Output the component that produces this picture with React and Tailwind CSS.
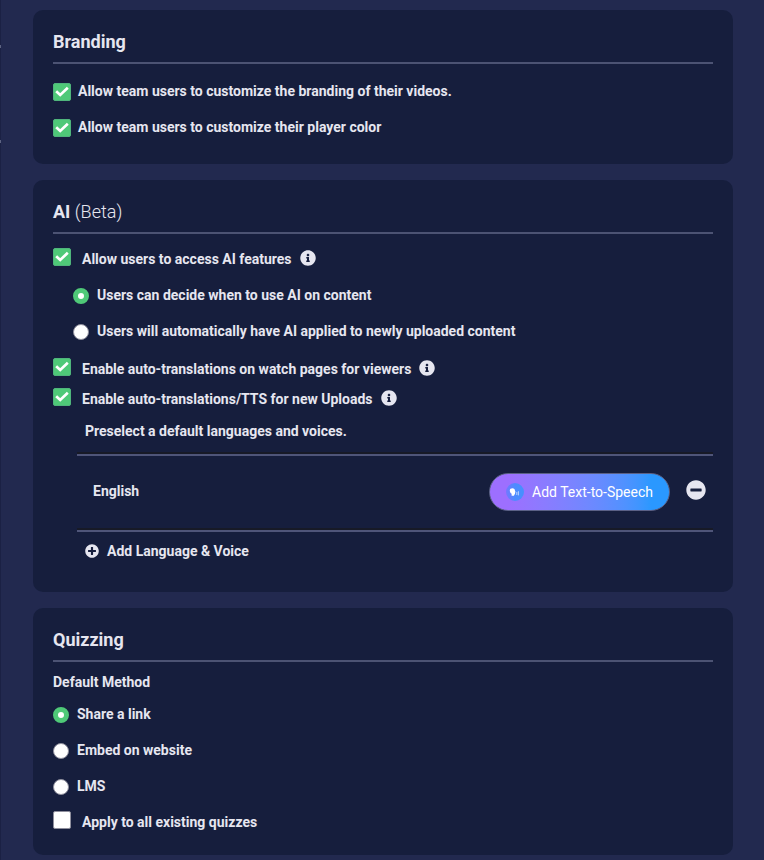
import { FaInfoCircle, FaMinusCircle, FaPlusCircle } from 'react-icons/fa'

/**
 * Team settings page: branding, AI and quizzing options.
 */
export default function App() {
  return (
    <div className="flex min-h-screen bg-[#22294f] font-['Roboto',sans-serif] text-sm font-bold text-[#e6e6f0]">
      <SidebarEdge />
      <main className="flex min-w-0 flex-1 flex-col gap-4 pt-2.5 pr-[31px] pb-[5px] pl-8">
        <BrandingCard />
        <AiCard />
        <QuizzingCard />
      </main>
    </div>
  )
}

// -------------------------------------------------------------------------
// Sections
// -------------------------------------------------------------------------

function BrandingCard() {
  return (
    <Card title="Branding" className="pb-[27px]">
      <div className="flex flex-col gap-[18px] pt-[19px]">
        <label className="flex items-center gap-[7px] leading-4">
          <Checkbox defaultChecked />
          <span className="pb-0.5">Allow team users to customize the branding of their videos.</span>
        </label>
        <label className="flex items-center gap-[7px] leading-4">
          <Checkbox defaultChecked />
          <span className="pb-0.5">Allow team users to customize their player color</span>
        </label>
      </div>
    </Card>
  )
}

function AiCard() {
  return (
    <Card
      title={<>AI <span className="font-light">(Beta)</span></>}
      className="pb-[31px]"
    >
      <div className="flex flex-col pt-3.5">
        <CheckRow label="Allow users to access AI features" defaultChecked info />

        <div className="flex flex-col gap-4 py-4 pl-5">
          <RadioRow name="ai-mode" label="Users can decide when to use AI on content" defaultChecked />
          <RadioRow name="ai-mode" label="Users will automatically have AI applied to newly uploaded content" />
        </div>

        <div className="flex flex-col gap-2">
          <CheckRow label="Enable auto-translations on watch pages for viewers" defaultChecked info />
          <CheckRow label="Enable auto-translations/TTS for new Uploads" defaultChecked info />
        </div>

        <div className="pt-[11px] pl-6">
          <p className="pb-[11px] pl-2 leading-5">Preselect a default languages and voices.</p>
          <Divider />
          <div className="flex h-[72px] items-center pr-[7px] pl-4">
            <span className="flex-1 pb-0.5">English</span>
            <button
              type="button"
              className="flex h-[38px] items-center gap-2 rounded-full border border-[#5b6186] bg-linear-to-r from-[#9d6fff] from-10% to-[#2a98ff] to-90% px-4 font-normal text-white"
            >
              <SpeechIcon />
              Add Text-to-Speech
            </button>
            <button type="button" aria-label="Remove English" className="ml-4 pb-1">
              <FaMinusCircle size={20} />
            </button>
          </div>
          <Divider />
          <button type="button" className="mt-[9px] ml-2 flex items-center gap-2 leading-5">
            <FaPlusCircle size={14} />
            Add Language &amp; Voice
          </button>
        </div>
      </div>
    </Card>
  )
}

function QuizzingCard() {
  return (
    <Card title="Quizzing" className="pb-[22px]">
      <fieldset className="pt-2.5">
        <legend className="float-left w-full leading-5">Default Method</legend>
        <div className="clear-both flex flex-col gap-4 pt-[13px]">
          <RadioRow name="quiz-method" label="Share a link" defaultChecked />
          <RadioRow name="quiz-method" label="Embed on website" />
          <RadioRow name="quiz-method" label="LMS" />
        </div>
      </fieldset>
      <div className="pt-3.5">
        <CheckRow label="Apply to all existing quizzes" />
      </div>
    </Card>
  )
}

// -------------------------------------------------------------------------
// Shared pieces
// -------------------------------------------------------------------------

function Card({ title, className, children }) {
  return (
    <section className={`rounded-[10px] bg-[#161e3d] px-5 pt-5 ${className}`}>
      <h2 className="border-b-2 border-[#4c5373] pb-2 text-lg leading-6">{title}</h2>
      {children}
    </section>
  )
}

function Checkbox(props) {
  return (
    <span className="relative size-[18px] flex-none">
      <input
        type="checkbox"
        className="peer block size-[18px] appearance-none rounded-xs border border-[#8f8f9d] bg-white checked:border-[#4fb57c] checked:bg-[#4fc978]"
        {...props}
      />
      <svg
        viewBox="0 0 18 18"
        className="pointer-events-none absolute inset-0 hidden size-[18px] peer-checked:block"
        fill="none"
        stroke="white"
        strokeWidth="2.7"
        aria-hidden="true"
      >
        <path d="M3.2 8.2L7.2 11.9L14.8 4.8" />
      </svg>
    </span>
  )
}

function CheckRow({ label, info, ...props }) {
  return (
    <div className="flex items-start gap-2">
      <label className="flex items-start gap-[11px] leading-[22px]">
        <Checkbox {...props} />
        {label}
      </label>
      {info && (
        <button type="button" aria-label="More information" className="pt-0.5">
          <FaInfoCircle size={16} />
        </button>
      )}
    </div>
  )
}

function RadioRow({ label, ...props }) {
  return (
    <label className="flex items-center gap-2 leading-[18px]">
      <input
        type="radio"
        className="size-4 flex-none appearance-none rounded-full border border-[#8f8f9d] bg-white checked:border-5 checked:border-[#4fc978]"
        {...props}
      />
      <span className="pb-0.5">{label}</span>
    </label>
  )
}

function Divider() {
  return <hr className="h-1 border-t-2 border-b-2 border-t-[#171a27] border-b-[#4f5579]" />
}

// Edge of the collapsed sidebar with its two separators
function SidebarEdge() {
  return (
    <aside className="flex w-px flex-none flex-col gap-[92px] bg-[#1b2144] pt-[45px]">
      <span className="h-[3px] bg-[#5d6382]" />
      <span className="h-[3px] bg-[#5d6382]" />
    </aside>
  )
}

function SpeechIcon() {
  return (
    <svg width="18" height="18" viewBox="0 0 18 18" aria-hidden="true">
      <defs>
        <linearGradient id="speech-bg" x1="0" y1="0" x2="1" y2="0">
          <stop offset="0" stopColor="#7278ff" />
          <stop offset="0.5" stopColor="#4d8bff" />
          <stop offset="1" stopColor="#4590ff" />
        </linearGradient>
      </defs>
      <circle cx="9" cy="9" r="9" fill="url(#speech-bg)" />
      <path d="M3.8 7.6C3.8 6 4.9 5.2 6.4 5.2C8.1 5.2 9 6.2 9 7.8L9.6 9.2L9 9.6V11.4H8.1V12.8H5.6V10.8C4.5 10.2 3.8 9.1 3.8 7.6Z" fill="white" />
      <path d="M10.8 9.4V11.6M12.4 8.6V12" stroke="#b9d2ff" strokeWidth="1" strokeLinecap="round" />
    </svg>
  )
}
